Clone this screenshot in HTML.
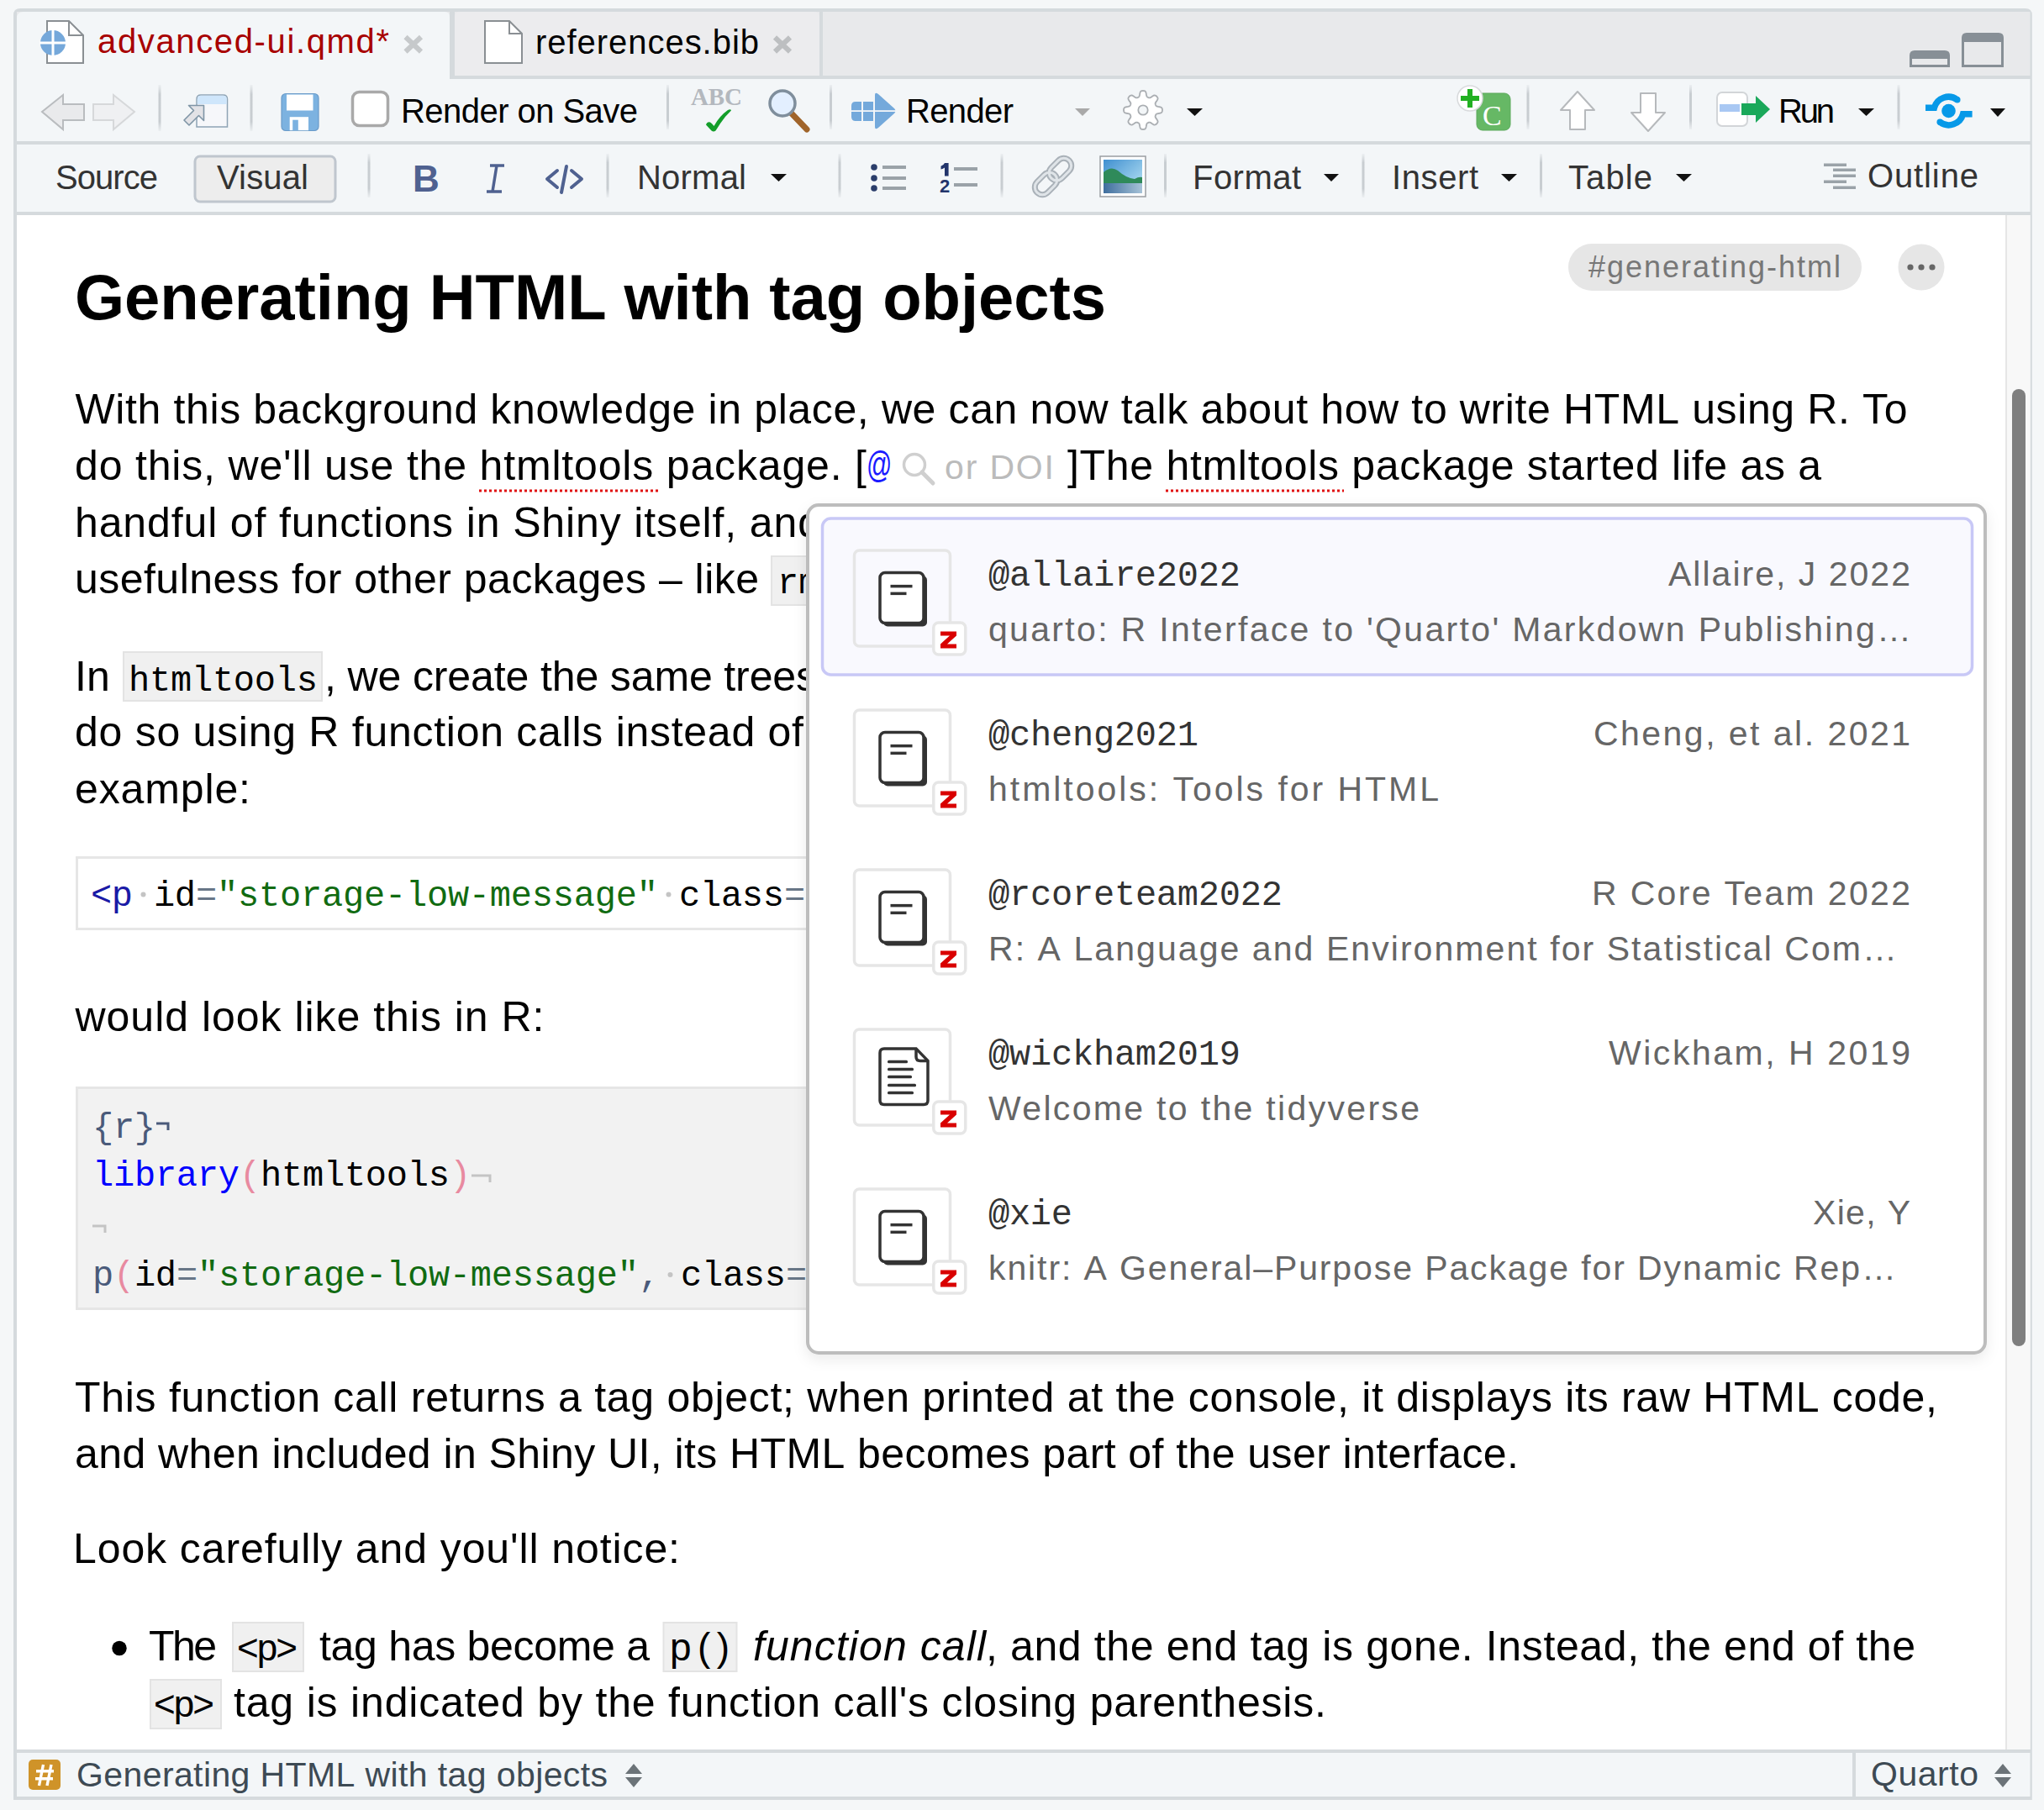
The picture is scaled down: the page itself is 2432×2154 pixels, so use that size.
<!DOCTYPE html>
<html><head><meta charset="utf-8"><title>advanced-ui.qmd</title>
<style>html,body{margin:0;padding:0;background:#f4f5f7;overflow:hidden}svg{display:block}text{white-space:pre}</style>
</head><body>
<svg width="2432" height="2154" viewBox="0 0 2432 2154">
<defs><linearGradient id="sepg" x1="0" y1="0" x2="0" y2="1"><stop offset="0" stop-color="#cdd2d6" stop-opacity="0.2"/><stop offset="0.2" stop-color="#c8cdd1"/><stop offset="0.8" stop-color="#c8cdd1"/><stop offset="1" stop-color="#cdd2d6" stop-opacity="0.2"/></linearGradient></defs>
<rect x="0" y="0" width="2432" height="2154" fill="#f5f7f8"/>
<path d="M16 2142 L16 18 Q16 10 24 10 L2409.8 10 Q2417.8 10 2417.8 18 L2417.8 2142 Z" fill="#d5dadd"/>
<rect x="20" y="14" width="2395.5" height="76" fill="#e8e9eb"/>
<rect x="20" y="94" width="2395.5" height="74" fill="#f3f6f8"/>
<rect x="20" y="172" width="2395.5" height="80" fill="#f3f6f8"/>
<rect x="20" y="256" width="2395.5" height="1826" fill="#ffffff"/>
<rect x="20" y="2086" width="2395.5" height="52" fill="#f3f6f8"/>
<rect x="2204" y="2086" width="4" height="52" fill="#d5dadd"/>
<rect x="2386" y="256" width="29.5" height="1826" fill="#f8f8f8"/>
<rect x="2386" y="256" width="2" height="1826" fill="#e6e6e6"/>
<rect x="2394" y="463" width="16" height="1139" rx="8" fill="#7f7f7f"/>
<path d="M20 22 Q20 14 28 14 L529 14 Q535 14 535 20 L535 94 L20 94 Z" fill="#f3f6f8"/>
<path d="M541 20 Q541 14 547 14 L969 14 Q975 14 975 20 L975 90 L541 90 Z" fill="#ececee"/>
<rect x="535" y="14" width="6" height="80" fill="#d5dadd"/>
<rect x="975" y="14" width="4" height="76" fill="#d5dadd"/>
<rect x="541" y="90" width="1874.5" height="4" fill="#d5dadd"/>
<path d="M56 25 L82 25 L99 42 L99 75 L56 75 Z" fill="#fff" stroke="#8a8f93" stroke-width="2"/>
<path d="M82 25 L82 42 L99 42" fill="none" stroke="#8a8f93" stroke-width="2"/>
<circle cx="63" cy="51" r="15" fill="#75a8da"/>
<rect x="61.5" y="35" width="3" height="32" fill="#fff"/><rect x="47" y="49.5" width="32" height="3" fill="#fff"/>
<text x="116" y="63" font-family="Liberation Sans" font-size="40" fill="#a80000" textLength="347" lengthAdjust="spacing">advanced-ui.qmd*</text>
<path d="M482.5 44 L501 61.5 M501 44 L482.5 61.5" stroke="#c6c9cb" stroke-width="6"/>
<path d="M577 25 L606 25 L621 40 L621 75 L577 75 Z" fill="#fff" stroke="#8a8f93" stroke-width="2"/>
<path d="M606 25 L606 40 L621 40" fill="none" stroke="#8a8f93" stroke-width="2"/>
<text x="637" y="64" font-family="Liberation Sans" font-size="40" fill="#000" textLength="266" lengthAdjust="spacing">references.bib</text>
<path d="M922 44.5 L940 61.5 M940 44.5 L922 61.5" stroke="#bdbfc1" stroke-width="6"/>
<path d="M2272 80 L2272 66 Q2272 60 2278 60 L2314 60 Q2320 60 2320 66 L2320 80 Z" fill="#878f96"/>
<rect x="2275" y="70" width="42" height="7" fill="#e8e9eb"/>
<path d="M2334 80 L2334 45 Q2334 39 2340 39 L2378 39 Q2384 39 2384 45 L2384 80 Z" fill="#878f96"/>
<rect x="2337" y="50" width="44" height="27" fill="#e8e9eb"/>
<path d="M50 133 L75 113 L75 124 L100 124 L100 143 L75 143 L75 154 Z" fill="#e9eaec" stroke="#b9bcbf" stroke-width="2"/>
<path d="M160 133 L135 113 L135 124 L111 124 L111 143 L135 143 L135 154 Z" fill="#eff0f2" stroke="#d6d8da" stroke-width="2"/>
<rect x="188.5" y="101" width="3" height="55" fill="url(#sepg)"/>
<path d="M234 151 L234 118 Q234 113 239 113 L265.5 113 Q270.5 113 270.5 118 L270.5 151 Z" fill="#f6f7fa" stroke="#8fa4b5" stroke-width="1.5"/>
<path d="M234.8 124 L234.8 118 Q234.8 113.8 239 113.8 L265.5 113.8 Q269.8 113.8 269.8 118 L269.8 124 Z" fill="#cfe6fb"/>
<path d="M224.5 125.5 L242.5 125.5 L242.5 143.5 L236.5 137.5 L225 149 L219 143 L230.5 131.5 Z" fill="#e2e2e6" stroke="#7f95a6" stroke-width="1.6" stroke-linejoin="round"/>
<rect x="297.5" y="101" width="3" height="55" fill="url(#sepg)"/>
<rect x="335" y="111.5" width="44" height="44" rx="5" fill="#7cb2e0" stroke="#6a9bc9" stroke-width="1.2"/>
<rect x="341" y="112.5" width="31.5" height="19" fill="#fff"/>
<rect x="344.7" y="139.2" width="22.3" height="16" fill="#fff"/>
<rect x="348.2" y="142.7" width="6.6" height="12.5" fill="#7cb2e0"/>
<rect x="419.5" y="109.5" width="42" height="40" rx="8" fill="#fff" stroke="#a9a9a9" stroke-width="3.5"/>
<text x="477" y="146" font-family="Liberation Sans" font-size="40" fill="#000" textLength="282" lengthAdjust="spacing">Render&#160;on&#160;Save</text>
<rect x="793.0" y="101" width="3" height="53" fill="url(#sepg)"/>
<text x="822" y="125" font-family="Liberation Serif" font-size="29" fill="#b3b8be" font-weight="bold" textLength="61" lengthAdjust="spacing">ABC</text>
<path d="M840 148.5 Q841.5 144.5 845 145.5 Q847 146.5 849.5 150 Q856 138 866 131 Q869.5 129.5 870 131.5 Q863 138 857 147 Q853.5 152.5 851.5 155.5 Q849 157.5 846.5 155.5 Z" fill="#139e2a"/>
<line x1="938" y1="131" x2="960" y2="154" stroke="#a0642a" stroke-width="7" stroke-linecap="round"/>
<circle cx="931" cy="123" r="15" fill="#e3efff" stroke="#7f8e9c" stroke-width="3.5"/>
<rect x="987.0" y="101" width="3" height="53" fill="url(#sepg)"/>
<path d="M1013 126 Q1013 121 1018 121 L1041 121 L1041 144 L1018 144 Q1013 144 1013 139 Z" fill="#74a9db"/>
<path d="M1041 113 Q1041 109 1045 112 L1064 129 Q1067 132 1064 135 L1045 152 Q1041 155 1041 151 Z" fill="#74a9db"/>
<rect x="1025" y="120" width="2" height="25" fill="#f3f6f8"/><rect x="1039" y="108" width="2" height="48" fill="#f3f6f8"/><rect x="1012" y="131.2" width="56" height="1.8" fill="#f3f6f8"/>
<text x="1078" y="146" font-family="Liberation Sans" font-size="40" fill="#000" textLength="128" lengthAdjust="spacing">Render</text>
<path d="M1279 129 L1297 129 L1288 138 Z" fill="#a9a9a9"/>
<path d="M1383.00 131.00 L1382.97 131.72 L1382.85 132.44 L1382.60 133.14 L1382.10 133.79 L1381.15 134.35 L1379.65 134.75 L1377.99 135.02 L1376.74 135.30 L1376.00 135.65 L1375.58 136.06 L1375.29 136.51 L1375.07 136.97 L1374.87 137.44 L1374.71 137.92 L1374.59 138.44 L1374.61 139.03 L1374.88 139.80 L1375.56 140.88 L1376.55 142.24 L1377.32 143.59 L1377.60 144.66 L1377.49 145.47 L1377.18 146.14 L1376.75 146.73 L1376.26 147.26 L1375.73 147.75 L1375.14 148.18 L1374.47 148.49 L1373.66 148.60 L1372.59 148.32 L1371.24 147.55 L1369.88 146.56 L1368.80 145.88 L1368.03 145.61 L1367.44 145.59 L1366.92 145.71 L1366.44 145.87 L1365.97 146.07 L1365.51 146.29 L1365.06 146.58 L1364.65 147.00 L1364.30 147.74 L1364.02 148.99 L1363.75 150.65 L1363.35 152.15 L1362.79 153.10 L1362.14 153.60 L1361.44 153.85 L1360.72 153.97 L1360.00 154.00 L1359.28 153.97 L1358.56 153.85 L1357.86 153.60 L1357.21 153.10 L1356.65 152.15 L1356.25 150.65 L1355.98 148.99 L1355.70 147.74 L1355.35 147.00 L1354.94 146.58 L1354.49 146.29 L1354.03 146.07 L1353.56 145.87 L1353.08 145.71 L1352.56 145.59 L1351.97 145.61 L1351.20 145.88 L1350.12 146.56 L1348.76 147.55 L1347.41 148.32 L1346.34 148.60 L1345.53 148.49 L1344.86 148.18 L1344.27 147.75 L1343.74 147.26 L1343.25 146.73 L1342.82 146.14 L1342.51 145.47 L1342.40 144.66 L1342.68 143.59 L1343.45 142.24 L1344.44 140.88 L1345.12 139.80 L1345.39 139.03 L1345.41 138.44 L1345.29 137.92 L1345.13 137.44 L1344.93 136.97 L1344.71 136.51 L1344.42 136.06 L1344.00 135.65 L1343.26 135.30 L1342.01 135.02 L1340.35 134.75 L1338.85 134.35 L1337.90 133.79 L1337.40 133.14 L1337.15 132.44 L1337.03 131.72 L1337.00 131.00 L1337.03 130.28 L1337.15 129.56 L1337.40 128.86 L1337.90 128.21 L1338.85 127.65 L1340.35 127.25 L1342.01 126.98 L1343.26 126.70 L1344.00 126.35 L1344.42 125.94 L1344.71 125.49 L1344.93 125.03 L1345.13 124.56 L1345.29 124.08 L1345.41 123.56 L1345.39 122.97 L1345.12 122.20 L1344.44 121.12 L1343.45 119.76 L1342.68 118.41 L1342.40 117.34 L1342.51 116.53 L1342.82 115.86 L1343.25 115.27 L1343.74 114.74 L1344.27 114.25 L1344.86 113.82 L1345.53 113.51 L1346.34 113.40 L1347.41 113.68 L1348.76 114.45 L1350.12 115.44 L1351.20 116.12 L1351.97 116.39 L1352.56 116.41 L1353.08 116.29 L1353.56 116.13 L1354.03 115.93 L1354.49 115.71 L1354.94 115.42 L1355.35 115.00 L1355.70 114.26 L1355.98 113.01 L1356.25 111.35 L1356.65 109.85 L1357.21 108.90 L1357.86 108.40 L1358.56 108.15 L1359.28 108.03 L1360.00 108.00 L1360.72 108.03 L1361.44 108.15 L1362.14 108.40 L1362.79 108.90 L1363.35 109.85 L1363.75 111.35 L1364.02 113.01 L1364.30 114.26 L1364.65 115.00 L1365.06 115.42 L1365.51 115.71 L1365.97 115.93 L1366.44 116.13 L1366.92 116.29 L1367.44 116.41 L1368.03 116.39 L1368.80 116.12 L1369.88 115.44 L1371.24 114.45 L1372.59 113.68 L1373.66 113.40 L1374.47 113.51 L1375.14 113.82 L1375.73 114.25 L1376.26 114.74 L1376.75 115.27 L1377.18 115.86 L1377.49 116.53 L1377.60 117.34 L1377.32 118.41 L1376.55 119.76 L1375.56 121.12 L1374.88 122.20 L1374.61 122.97 L1374.59 123.56 L1374.71 124.08 L1374.87 124.56 L1375.07 125.03 L1375.29 125.49 L1375.58 125.94 L1376.00 126.35 L1376.74 126.70 L1377.99 126.98 L1379.65 127.25 L1381.15 127.65 L1382.10 128.21 L1382.60 128.86 L1382.85 129.56 L1382.97 130.28 Z" fill="#fff" stroke="#aaaeb2" stroke-width="1.8"/>
<circle cx="1360" cy="131" r="5.7" fill="#f3f6f8" stroke="#aaaeb2" stroke-width="1.8"/>
<path d="M1412 129 L1431 129 L1421.5 138 Z" fill="#111"/>
<rect x="1757" y="111" width="40" height="44" rx="7" fill="#66b865" stroke="#5aa85a" stroke-width="1"/>
<text x="1764" y="149" font-family="Liberation Serif" font-size="34" fill="#fff">C</text>
<circle cx="1749" cy="117" r="15" fill="#fff" stroke="#d8dadc" stroke-width="1.5"/>
<path d="M1749 106 L1749 128 M1738 117 L1760 117" stroke="#22b022" stroke-width="6"/>
<rect x="1816.5" y="101" width="3" height="53" fill="url(#sepg)"/>
<path d="M1877 109 L1897 131 L1886 131 L1886 154 L1868 154 L1868 131 L1857 131 Z" fill="#fff" stroke="#b6b9bc" stroke-width="2" stroke-linejoin="round"/>
<path d="M1961 156 L1981 134 L1970 134 L1970 111 L1952 111 L1952 134 L1941 134 Z" fill="#fff" stroke="#b6b9bc" stroke-width="2" stroke-linejoin="round"/>
<rect x="2010.0" y="101" width="3" height="53" fill="url(#sepg)"/>
<rect x="2043" y="110" width="36" height="40" rx="6" fill="#fff" stroke="#d2d5d8" stroke-width="2"/>
<rect x="2046" y="124" width="24" height="9" fill="#a9c8f3"/>
<path d="M2072 123 L2089 123 L2089 114 L2106 130 L2089 146 L2089 137 L2072 137 Z" fill="#1aa85a"/>
<text x="2116" y="146" font-family="Liberation Sans" font-size="40" fill="#000" textLength="67" lengthAdjust="spacing">Run</text>
<path d="M2211 129 L2230 129 L2220.5 138 Z" fill="#111"/>
<rect x="2257.5" y="101" width="3" height="53" fill="url(#sepg)"/>
<path d="M2291 128.3 L2301.4 128.3 A17.5 17.5 0 0 1 2328.8 118.7" fill="none" stroke="#0799e8" stroke-width="7.5"/>
<circle cx="2328.8" cy="118.7" r="3.75" fill="#0799e8"/>
<path d="M2346.6 135.8 L2335.6 135.8 A17.5 17.5 0 0 1 2308.2 145.3" fill="none" stroke="#0799e8" stroke-width="7.5"/>
<circle cx="2308.2" cy="145.3" r="3.75" fill="#0799e8"/>
<circle cx="2318.5" cy="132" r="8.3" fill="#0799e8"/>
<path d="M2368 129 L2386 129 L2377 139 Z" fill="#111"/>
<text x="66" y="224.5" font-family="Liberation Sans" font-size="40" fill="#333" textLength="122" lengthAdjust="spacing">Source</text>
<rect x="232" y="186" width="167" height="54" rx="6" fill="#ededed" stroke="#bfc6ce" stroke-width="3"/>
<text x="258" y="224.5" font-family="Liberation Sans" font-size="40" fill="#333" textLength="109" lengthAdjust="spacing">Visual</text>
<rect x="437.5" y="183" width="3" height="52" fill="url(#sepg)"/>
<text x="491" y="228" font-family="Liberation Sans" font-size="44" fill="#4f6190" font-weight="bold" textLength="26" lengthAdjust="spacing">B</text>
<path d="M579 228 L597 228 M583 197 L600 197 M591 197 L586 228" stroke="#4f6190" stroke-width="3.5" fill="none"/>
<path d="M663 203 L651 213 L663 223 M680 203 L692 213 L680 223 M674 198 L668 229" stroke="#4f6190" stroke-width="4" fill="none" stroke-linecap="round" stroke-linejoin="round"/>
<rect x="721.5" y="183" width="3" height="52" fill="url(#sepg)"/>
<text x="758" y="224.5" font-family="Liberation Sans" font-size="40" fill="#333" textLength="130" lengthAdjust="spacing">Normal</text>
<path d="M917 207 L936 207 L926.5 216 Z" fill="#111"/>
<rect x="997.5" y="183" width="3" height="52" fill="url(#sepg)"/>
<circle cx="1040" cy="199" r="3.8" fill="#2a3d6a"/>
<rect x="1050" y="197" width="28" height="4" fill="#9aa2a8"/>
<circle cx="1040" cy="212" r="3.8" fill="#2a3d6a"/>
<rect x="1050" y="210" width="28" height="4" fill="#9aa2a8"/>
<circle cx="1040" cy="224" r="3.8" fill="#2a3d6a"/>
<rect x="1050" y="222" width="28" height="4" fill="#9aa2a8"/>
<path d="M1124 194 L1128.6 194 L1128.6 209.6 L1124 209.6 L1124 199.5 Q1122 201 1119.5 201.5 L1119.5 197.8 Q1122.5 196.8 1124 194 Z" fill="#22346b"/>
<text x="1118" y="229.3" font-family="Liberation Sans" font-size="22" fill="#22346b" font-weight="bold">2</text>
<rect x="1135" y="199" width="28" height="4" fill="#9aa2a8"/><rect x="1135" y="218" width="28" height="4" fill="#9aa2a8"/>
<rect x="1190.5" y="183" width="3" height="52" fill="url(#sepg)"/>
<g transform="rotate(-45 1253 210)"><rect x="1226" y="201" width="30" height="18" rx="9" fill="none" stroke="#a9b1b8" stroke-width="7"/><rect x="1250" y="201" width="30" height="18" rx="9" fill="none" stroke="#a9b1b8" stroke-width="7"/><rect x="1226" y="201" width="30" height="18" rx="9" fill="none" stroke="#dfe4e8" stroke-width="3"/><rect x="1250" y="201" width="30" height="18" rx="9" fill="none" stroke="#dfe4e8" stroke-width="3"/></g>
<defs><linearGradient id="sky" x1="0" y1="0" x2="1" y2="1"><stop offset="0" stop-color="#3f8fd0"/><stop offset="1" stop-color="#bfe8f7"/></linearGradient><linearGradient id="water" x1="0" y1="0" x2="1" y2="0"><stop offset="0" stop-color="#3f6e9e"/><stop offset="1" stop-color="#a7c3d8"/></linearGradient></defs>
<rect x="1309" y="186" width="54" height="48" fill="#fff" stroke="#9a9ea2" stroke-width="1.5"/>
<rect x="1313" y="190" width="46" height="40" fill="url(#sky)"/>
<path d="M1313 205 Q1322 197 1330 203 Q1340 212 1350 213 Q1355 210 1359 211 L1359 219 L1313 219 Z" fill="#2f8a5a"/>
<rect x="1313" y="218" width="46" height="12" fill="url(#water)"/>
<rect x="1385.0" y="183" width="3" height="52" fill="url(#sepg)"/>
<text x="1419" y="224.5" font-family="Liberation Sans" font-size="40" fill="#333" textLength="129" lengthAdjust="spacing">Format</text>
<path d="M1575 207 L1593 207 L1584 216 Z" fill="#111"/>
<rect x="1620.5" y="183" width="3" height="52" fill="url(#sepg)"/>
<text x="1656" y="224.5" font-family="Liberation Sans" font-size="40" fill="#333" textLength="103" lengthAdjust="spacing">Insert</text>
<path d="M1786 207 L1805 207 L1795.5 216 Z" fill="#111"/>
<rect x="1832.0" y="183" width="3" height="52" fill="url(#sepg)"/>
<text x="1866" y="224.5" font-family="Liberation Sans" font-size="40" fill="#333" textLength="100" lengthAdjust="spacing">Table</text>
<path d="M1994 207 L2013 207 L2003.5 216 Z" fill="#111"/>
<rect x="2170" y="194.5" width="27" height="3.5" fill="#9aa2a8"/>
<rect x="2181" y="200.5" width="27" height="3.5" fill="#9aa2a8"/>
<rect x="2181" y="207.5" width="27" height="3.5" fill="#9aa2a8"/>
<rect x="2170" y="214.5" width="27" height="3.5" fill="#9aa2a8"/>
<rect x="2181" y="221.5" width="27" height="3.5" fill="#9aa2a8"/>
<text x="2222" y="222.5" font-family="Liberation Sans" font-size="40" fill="#333" textLength="132" lengthAdjust="spacing">Outline</text>
<text x="89" y="380" font-family="Liberation Sans" font-size="76" fill="#000" font-weight="bold" textLength="1227" lengthAdjust="spacing">Generating&#160;HTML&#160;with&#160;tag&#160;objects</text>
<rect x="1866" y="290" width="349" height="56" rx="28" fill="#e6e6e6"/>
<text x="1890" y="329.5" font-family="Liberation Sans" font-size="36" fill="#777" textLength="300" lengthAdjust="spacing">#generating-html</text>
<circle cx="2286" cy="318" r="27.5" fill="#e6e6e6"/>
<circle cx="2273" cy="318" r="3.6" fill="#666"/>
<circle cx="2286" cy="318" r="3.6" fill="#666"/>
<circle cx="2299" cy="318" r="3.6" fill="#666"/>
<text x="89.5" y="503.5" font-family="Liberation Sans" font-size="50" fill="#000" textLength="2180" lengthAdjust="spacing">With&#160;this&#160;background&#160;knowledge&#160;in&#160;place,&#160;we&#160;can&#160;now&#160;talk&#160;about&#160;how&#160;to&#160;write&#160;HTML&#160;using&#160;R.&#160;To</text>
<text x="89" y="571" font-family="Liberation Sans" font-size="50" fill="#000" textLength="942" lengthAdjust="spacing">do&#160;this,&#160;we&#x27;ll&#160;use&#160;the&#160;htmltools&#160;package.&#160;[</text>
<line x1="570" y1="584" x2="786" y2="584" stroke="#e01010" stroke-width="3" stroke-dasharray="3 3"/>
<text transform="translate(1031,568) scale(0.68,1)" font-family="Liberation Sans" font-size="44" fill="#1a1aff">@</text>
<circle cx="1088" cy="553" r="12.5" fill="none" stroke="#cfcfcf" stroke-width="3.5"/><line x1="1097" y1="562" x2="1110" y2="575" stroke="#cfcfcf" stroke-width="5" stroke-linecap="round"/>
<text x="1124" y="570" font-family="Liberation Sans" font-size="41" fill="#bbbbbb" textLength="130" lengthAdjust="spacing">or&#160;DOI</text>
<text x="1270" y="571" font-family="Liberation Sans" font-size="50" fill="#000" textLength="897" lengthAdjust="spacing">]The&#160;htmltools&#160;package&#160;started&#160;life&#160;as&#160;a</text>
<line x1="1387" y1="584" x2="1599" y2="584" stroke="#e01010" stroke-width="3" stroke-dasharray="3 3"/>
<text x="89" y="638.5" font-family="Liberation Sans" font-size="50" fill="#000" textLength="888" lengthAdjust="spacing">handful&#160;of&#160;functions&#160;in&#160;Shiny&#160;itself,&#160;and</text>
<text x="89" y="706" font-family="Liberation Sans" font-size="50" fill="#000" textLength="814" lengthAdjust="spacing">usefulness&#160;for&#160;other&#160;packages&#160;–&#160;like</text>
<rect x="918" y="662" width="60" height="58" fill="#f0f0f0" stroke="#e3e3e3" stroke-width="2"/>
<text x="925" y="706" font-family="Liberation Mono" font-size="42" fill="#000">rmarkdown</text>
<text x="89" y="822" font-family="Liberation Sans" font-size="50" fill="#000">In</text>
<rect x="147" y="776" width="236" height="58" fill="#f0f0f0" stroke="#e3e3e3" stroke-width="2"/>
<text x="153" y="822" font-family="Liberation Mono" font-size="42" fill="#000" textLength="225" lengthAdjust="spacing">htmltools</text>
<text x="386" y="822" font-family="Liberation Sans" font-size="50" fill="#000" textLength="586" lengthAdjust="spacing">,&#160;we&#160;create&#160;the&#160;same&#160;trees</text>
<text x="89" y="888" font-family="Liberation Sans" font-size="50" fill="#000" textLength="867" lengthAdjust="spacing">do&#160;so&#160;using&#160;R&#160;function&#160;calls&#160;instead&#160;of</text>
<text x="89" y="955.5" font-family="Liberation Sans" font-size="50" fill="#000" textLength="209" lengthAdjust="spacing">example:</text>
<rect x="91.5" y="1020.5" width="1400" height="85" fill="#fff" stroke="#e6e6e6" stroke-width="3"/>
<text x="108.0" y="1077.5" font-family="Liberation Mono" font-size="42" fill="#1a1aa6" textLength="50.0" lengthAdjust="spacing">&lt;p</text>
<circle cx="170.5" cy="1064.5" r="3" fill="#c4c4c4"/>
<text x="183.0" y="1077.5" font-family="Liberation Mono" font-size="42" fill="#000" textLength="50.0" lengthAdjust="spacing">id</text>
<text x="233.0" y="1077.5" font-family="Liberation Mono" font-size="42" fill="#687687" textLength="25.0" lengthAdjust="spacing">=</text>
<text x="258.0" y="1077.5" font-family="Liberation Mono" font-size="42" fill="#116b11" textLength="525.0" lengthAdjust="spacing">&quot;storage-low-message&quot;</text>
<circle cx="795.5" cy="1064.5" r="3" fill="#c4c4c4"/>
<text x="808.0" y="1077.5" font-family="Liberation Mono" font-size="42" fill="#000" textLength="125.0" lengthAdjust="spacing">class</text>
<text x="933.0" y="1077.5" font-family="Liberation Mono" font-size="42" fill="#687687" textLength="25.0" lengthAdjust="spacing">=</text>
<text x="958.0" y="1077.5" font-family="Liberation Mono" font-size="42" fill="#116b11" textLength="25.0" lengthAdjust="spacing">&quot;</text>
<text x="89.5" y="1227" font-family="Liberation Sans" font-size="50" fill="#000" textLength="558" lengthAdjust="spacing">would&#160;look&#160;like&#160;this&#160;in&#160;R:</text>
<rect x="91.5" y="1294.5" width="1400" height="263" fill="#f2f2f2" stroke="#e6e6e6" stroke-width="3"/>
<text x="110.0" y="1353.5" font-family="Liberation Mono" font-size="42" fill="#4a5a7a" textLength="75.0" lengthAdjust="spacing">{r}</text>
<path d="M186 1337 L200 1337 L200 1345" fill="none" stroke="#4a5a7a" stroke-width="3"/>
<text x="110.0" y="1410.5" font-family="Liberation Mono" font-size="42" fill="#0000ff" textLength="175.0" lengthAdjust="spacing">library</text>
<text x="285.0" y="1410.5" font-family="Liberation Mono" font-size="42" fill="#e88aa0" textLength="25.0" lengthAdjust="spacing">(</text>
<text x="310.0" y="1410.5" font-family="Liberation Mono" font-size="42" fill="#000" textLength="225.0" lengthAdjust="spacing">htmltools</text>
<text x="535.0" y="1410.5" font-family="Liberation Mono" font-size="42" fill="#e88aa0" textLength="25.0" lengthAdjust="spacing">)</text>
<path d="M561 1399 L583 1399 L583 1407" fill="none" stroke="#c4c4c4" stroke-width="3"/>
<path d="M110 1459 L125 1459 L125 1467" fill="none" stroke="#c4c4c4" stroke-width="3"/>
<text x="110.0" y="1530" font-family="Liberation Mono" font-size="42" fill="#4a5a7a" textLength="25.0" lengthAdjust="spacing">p</text>
<text x="135.0" y="1530" font-family="Liberation Mono" font-size="42" fill="#e88aa0" textLength="25.0" lengthAdjust="spacing">(</text>
<text x="160.0" y="1530" font-family="Liberation Mono" font-size="42" fill="#000" textLength="50.0" lengthAdjust="spacing">id</text>
<text x="210.0" y="1530" font-family="Liberation Mono" font-size="42" fill="#687687" textLength="25.0" lengthAdjust="spacing">=</text>
<text x="235.0" y="1530" font-family="Liberation Mono" font-size="42" fill="#116b11" textLength="525.0" lengthAdjust="spacing">&quot;storage-low-message&quot;</text>
<text x="760.0" y="1530" font-family="Liberation Mono" font-size="42" fill="#4a5a7a" textLength="25.0" lengthAdjust="spacing">,</text>
<circle cx="797.5" cy="1517" r="3" fill="#c4c4c4"/>
<text x="810.0" y="1530" font-family="Liberation Mono" font-size="42" fill="#000" textLength="125.0" lengthAdjust="spacing">class</text>
<text x="935.0" y="1530" font-family="Liberation Mono" font-size="42" fill="#687687" textLength="25.0" lengthAdjust="spacing">=</text>
<text x="960.0" y="1530" font-family="Liberation Mono" font-size="42" fill="#116b11" textLength="25.0" lengthAdjust="spacing">&quot;</text>
<text x="89" y="1679.5" font-family="Liberation Sans" font-size="50" fill="#000" textLength="2216" lengthAdjust="spacing">This&#160;function&#160;call&#160;returns&#160;a&#160;tag&#160;object;&#160;when&#160;printed&#160;at&#160;the&#160;console,&#160;it&#160;displays&#160;its&#160;raw&#160;HTML&#160;code,</text>
<text x="89" y="1747" font-family="Liberation Sans" font-size="50" fill="#000" textLength="1718" lengthAdjust="spacing">and&#160;when&#160;included&#160;in&#160;Shiny&#160;UI,&#160;its&#160;HTML&#160;becomes&#160;part&#160;of&#160;the&#160;user&#160;interface.</text>
<text x="87" y="1860" font-family="Liberation Sans" font-size="50" fill="#000" textLength="722" lengthAdjust="spacing">Look&#160;carefully&#160;and&#160;you&#x27;ll&#160;notice:</text>
<circle cx="142" cy="1961.5" r="8.7" fill="#000"/>
<text x="177" y="1976" font-family="Liberation Sans" font-size="50" fill="#000" textLength="81" lengthAdjust="spacing">The</text>
<rect x="277" y="1931" width="84" height="58" fill="#f0f0f0" stroke="#e3e3e3" stroke-width="2"/>
<text x="282" y="1976" font-family="Liberation Sans" font-size="44" fill="#000" textLength="72" lengthAdjust="spacing">&lt;p&gt;</text>
<text x="380" y="1976" font-family="Liberation Sans" font-size="50" fill="#000" textLength="393" lengthAdjust="spacing">tag&#160;has&#160;become&#160;a</text>
<rect x="789.5" y="1931" width="87" height="58" fill="#f0f0f0" stroke="#e3e3e3" stroke-width="2"/>
<text x="797" y="1976" font-family="Liberation Sans" font-size="46" fill="#000" textLength="71" lengthAdjust="spacing">p()</text>
<text x="896" y="1976" font-family="Liberation Sans" font-size="50" fill="#000" font-style="italic" textLength="277" lengthAdjust="spacing">function&#160;call</text>
<text x="1173" y="1976" font-family="Liberation Sans" font-size="50" fill="#000" textLength="1106" lengthAdjust="spacing">,&#160;and&#160;the&#160;end&#160;tag&#160;is&#160;gone.&#160;Instead,&#160;the&#160;end&#160;of&#160;the</text>
<rect x="179" y="1999" width="84" height="58" fill="#f0f0f0" stroke="#e3e3e3" stroke-width="2"/>
<text x="183" y="2043" font-family="Liberation Sans" font-size="44" fill="#000" textLength="72" lengthAdjust="spacing">&lt;p&gt;</text>
<text x="278" y="2043" font-family="Liberation Sans" font-size="50" fill="#000" textLength="1300" lengthAdjust="spacing">tag&#160;is&#160;indicated&#160;by&#160;the&#160;function&#160;call&#x27;s&#160;closing&#160;parenthesis.</text>
<rect x="34" y="2094" width="38" height="36" rx="5" fill="#cf9329"/>
<path d="M51.5 2100 L46.5 2125 M61 2100 L56 2125 M43 2107.8 L64 2107.8 M42 2116.8 L63 2116.8" stroke="#fff" stroke-width="3.4"/>
<text x="91" y="2126" font-family="Liberation Sans" font-size="41" fill="#3d4a54" textLength="632" lengthAdjust="spacing">Generating&#160;HTML&#160;with&#160;tag&#160;objects</text>
<path d="M744 2111 L764 2111 L754 2099 Z M744 2115 L764 2115 L754 2127 Z" fill="#6b7378"/>
<text x="2226" y="2125" font-family="Liberation Sans" font-size="41" fill="#3d4a54" textLength="128" lengthAdjust="spacing">Quarto</text>
<path d="M2373 2111 L2393 2111 L2383 2099 Z M2373 2115 L2393 2115 L2383 2127 Z" fill="#6b7378"/>
<defs><filter id="sh" x="-5%" y="-5%" width="110%" height="115%"><feDropShadow dx="0" dy="6" stdDeviation="8" flood-color="#000" flood-opacity="0.08"/></filter></defs>
<rect x="961" y="601" width="1401" height="1009" rx="13" fill="#fff" stroke="#bdbdbd" stroke-width="4" filter="url(#sh)"/>
<rect x="978.5" y="617" width="1368" height="186" rx="10" fill="#f9f9fe" stroke="#c8c8f6" stroke-width="3.5"/>
<rect x="1016.5" y="654.9" width="114" height="114" rx="6" fill="none" stroke="#e6e6e6" stroke-width="3.5"/>
<rect x="1051" y="685.4" width="52" height="60" rx="5" fill="#333"/>
<rect x="1047" y="681.4" width="52" height="60" rx="6" fill="#fff" stroke="#333" stroke-width="3.5"/>
<rect x="1059.5" y="695.9" width="26" height="3.5" fill="#333"/>
<rect x="1059.5" y="704.6" width="19" height="3.5" fill="#333"/>
<rect x="1110.75" y="740.9" width="38" height="38" rx="6" fill="#fff" stroke="#e6e6e6" stroke-width="3.5"/>
<path d="M1119 751.4 L1138 751.4 L1138 756.4 L1127 766.4 L1138 766.4 L1138 771.4 L1119 771.4 L1119 766.4 L1130 756.4 L1119 756.4 Z" fill="#d90000"/>
<text x="1176" y="697" font-family="Liberation Mono" font-size="42" fill="#333" textLength="300" lengthAdjust="spacing">@allaire2022</text>
<text x="1985" y="697" font-family="Liberation Sans" font-size="41" fill="#666" textLength="288" lengthAdjust="spacing">Allaire,&#160;J&#160;2022</text>
<text x="1176" y="762.5" font-family="Liberation Sans" font-size="41" fill="#666" textLength="1098" lengthAdjust="spacing">quarto:&#160;R&#160;Interface&#160;to&#160;&#x27;Quarto&#x27;&#160;Markdown&#160;Publishing…</text>
<rect x="1016.5" y="844.9" width="114" height="114" rx="6" fill="none" stroke="#e6e6e6" stroke-width="3.5"/>
<rect x="1051" y="875.4" width="52" height="60" rx="5" fill="#333"/>
<rect x="1047" y="871.4" width="52" height="60" rx="6" fill="#fff" stroke="#333" stroke-width="3.5"/>
<rect x="1059.5" y="885.9" width="26" height="3.5" fill="#333"/>
<rect x="1059.5" y="894.6" width="19" height="3.5" fill="#333"/>
<rect x="1110.75" y="930.9" width="38" height="38" rx="6" fill="#fff" stroke="#e6e6e6" stroke-width="3.5"/>
<path d="M1119 941.4 L1138 941.4 L1138 946.4 L1127 956.4 L1138 956.4 L1138 961.4 L1119 961.4 L1119 956.4 L1130 946.4 L1119 946.4 Z" fill="#d90000"/>
<text x="1176" y="887" font-family="Liberation Mono" font-size="42" fill="#333" textLength="250" lengthAdjust="spacing">@cheng2021</text>
<text x="1896" y="887" font-family="Liberation Sans" font-size="41" fill="#666" textLength="377" lengthAdjust="spacing">Cheng,&#160;et&#160;al.&#160;2021</text>
<text x="1176" y="952.5" font-family="Liberation Sans" font-size="41" fill="#666" textLength="536" lengthAdjust="spacing">htmltools:&#160;Tools&#160;for&#160;HTML</text>
<rect x="1016.5" y="1034.9" width="114" height="114" rx="6" fill="none" stroke="#e6e6e6" stroke-width="3.5"/>
<rect x="1051" y="1065.4" width="52" height="60" rx="5" fill="#333"/>
<rect x="1047" y="1061.4" width="52" height="60" rx="6" fill="#fff" stroke="#333" stroke-width="3.5"/>
<rect x="1059.5" y="1075.9" width="26" height="3.5" fill="#333"/>
<rect x="1059.5" y="1084.6000000000001" width="19" height="3.5" fill="#333"/>
<rect x="1110.75" y="1120.9" width="38" height="38" rx="6" fill="#fff" stroke="#e6e6e6" stroke-width="3.5"/>
<path d="M1119 1131.4 L1138 1131.4 L1138 1136.4 L1127 1146.4 L1138 1146.4 L1138 1151.4 L1119 1151.4 L1119 1146.4 L1130 1136.4 L1119 1136.4 Z" fill="#d90000"/>
<text x="1176" y="1077" font-family="Liberation Mono" font-size="42" fill="#333" textLength="350" lengthAdjust="spacing">@rcoreteam2022</text>
<text x="1894" y="1077" font-family="Liberation Sans" font-size="41" fill="#666" textLength="379" lengthAdjust="spacing">R&#160;Core&#160;Team&#160;2022</text>
<text x="1176" y="1142.5" font-family="Liberation Sans" font-size="41" fill="#666" textLength="1081" lengthAdjust="spacing">R:&#160;A&#160;Language&#160;and&#160;Environment&#160;for&#160;Statistical&#160;Com…</text>
<rect x="1016.5" y="1224.9" width="114" height="114" rx="6" fill="none" stroke="#e6e6e6" stroke-width="3.5"/>
<path d="M1052 1247.9 L1090 1247.9 L1104 1262.4 L1104 1309.4 Q1104 1314.4 1099 1314.4 L1052 1314.4 Q1047 1314.4 1047 1309.4 L1047 1252.9 Q1047 1247.9 1052 1247.9 Z" fill="#fff" stroke="#333" stroke-width="3.5"/>
<path d="M1090 1247.9 L1090 1257.4 Q1090 1262.4 1095 1262.4 L1104 1262.4" fill="none" stroke="#333" stroke-width="3.5"/>
<rect x="1056" y="1261.65" width="24" height="3.5" rx="1.5" fill="#333"/>
<rect x="1056" y="1270.65" width="31" height="3.5" rx="1.5" fill="#333"/>
<rect x="1056" y="1279.65" width="29" height="3.5" rx="1.5" fill="#333"/>
<rect x="1056" y="1289.65" width="34" height="3.5" rx="1.5" fill="#333"/>
<rect x="1056" y="1298.65" width="31" height="3.5" rx="1.5" fill="#333"/>
<rect x="1110.75" y="1310.9" width="38" height="38" rx="6" fill="#fff" stroke="#e6e6e6" stroke-width="3.5"/>
<path d="M1119 1321.4 L1138 1321.4 L1138 1326.4 L1127 1336.4 L1138 1336.4 L1138 1341.4 L1119 1341.4 L1119 1336.4 L1130 1326.4 L1119 1326.4 Z" fill="#d90000"/>
<text x="1176" y="1267" font-family="Liberation Mono" font-size="42" fill="#333" textLength="300" lengthAdjust="spacing">@wickham2019</text>
<text x="1914" y="1267" font-family="Liberation Sans" font-size="41" fill="#666" textLength="359" lengthAdjust="spacing">Wickham,&#160;H&#160;2019</text>
<text x="1176" y="1332.5" font-family="Liberation Sans" font-size="41" fill="#666" textLength="513" lengthAdjust="spacing">Welcome&#160;to&#160;the&#160;tidyverse</text>
<rect x="1016.5" y="1414.9" width="114" height="114" rx="6" fill="none" stroke="#e6e6e6" stroke-width="3.5"/>
<rect x="1051" y="1445.4" width="52" height="60" rx="5" fill="#333"/>
<rect x="1047" y="1441.4" width="52" height="60" rx="6" fill="#fff" stroke="#333" stroke-width="3.5"/>
<rect x="1059.5" y="1455.9" width="26" height="3.5" fill="#333"/>
<rect x="1059.5" y="1464.6000000000001" width="19" height="3.5" fill="#333"/>
<rect x="1110.75" y="1500.9" width="38" height="38" rx="6" fill="#fff" stroke="#e6e6e6" stroke-width="3.5"/>
<path d="M1119 1511.4 L1138 1511.4 L1138 1516.4 L1127 1526.4 L1138 1526.4 L1138 1531.4 L1119 1531.4 L1119 1526.4 L1130 1516.4 L1119 1516.4 Z" fill="#d90000"/>
<text x="1176" y="1457" font-family="Liberation Mono" font-size="42" fill="#333" textLength="100" lengthAdjust="spacing">@xie</text>
<text x="2157" y="1457" font-family="Liberation Sans" font-size="41" fill="#666" textLength="116" lengthAdjust="spacing">Xie,&#160;Y</text>
<text x="1176" y="1522.5" font-family="Liberation Sans" font-size="41" fill="#666" textLength="1080" lengthAdjust="spacing">knitr:&#160;A&#160;General–Purpose&#160;Package&#160;for&#160;Dynamic&#160;Rep…</text>
</svg>
</body></html>
